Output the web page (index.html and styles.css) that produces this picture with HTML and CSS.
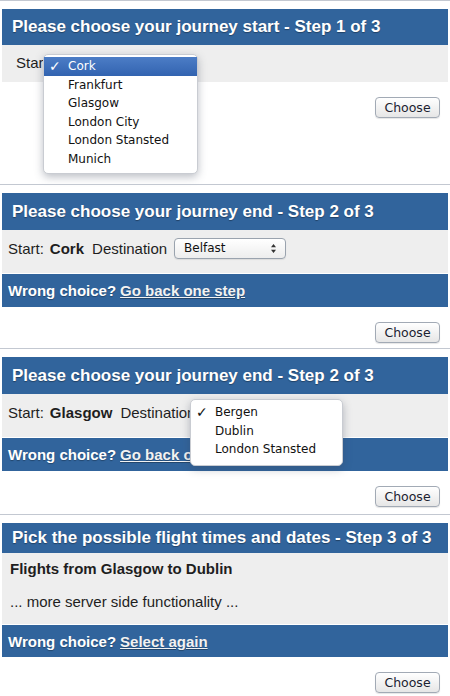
FILE: index.html
```html
<!DOCTYPE html>
<html lang="en">
<head>
<meta charset="utf-8">
<title>Journey steps</title>
<link rel="stylesheet" href="styles.css">
</head>
<body>
<div class="screen s1">
  <div class="panel">
    <div class="bar head">Please choose your journey start - Step 1 of 3</div>
    <div class="body body-s1"><span>Start:</span></div>
  </div>
  <div class="actions"><button class="btn">Choose</button></div>
  <ul class="menu menu-start">
    <li class="sel"><span class="check">✓</span>Cork</li>
    <li>Frankfurt</li>
    <li>Glasgow</li>
    <li>London City</li>
    <li>London Stansted</li>
    <li>Munich</li>
  </ul>
</div>

<div class="screen s2">
  <div class="panel">
    <div class="bar head">Please choose your journey end - Step 2 of 3</div>
    <div class="body">
      <span>Start:</span><b class="city">Cork</b><span>Destination</span>
      <span class="select">Belfast
        <svg class="arrows" width="7" height="11" viewBox="0 0 7 11"><path d="M3.5 1 L6 4.2 H1 Z M3.5 10 L6 6.8 H1 Z" fill="#333"/></svg>
      </span>
    </div>
    <div class="bar foot">Wrong choice? <a href="#">Go back one step</a></div>
  </div>
  <div class="actions"><button class="btn">Choose</button></div>
</div>

<div class="screen s3">
  <div class="panel">
    <div class="bar head">Please choose your journey end - Step 2 of 3</div>
    <div class="body">
      <span>Start:</span><b class="city">Glasgow</b><span>Destination</span>
    </div>
    <div class="bar foot">Wrong choice? <a href="#">Go back one step</a></div>
  </div>
  <div class="actions"><button class="btn">Choose</button></div>
  <ul class="menu menu-dest">
    <li><span class="check">✓</span>Bergen</li>
    <li>Dublin</li>
    <li>London Stansted</li>
  </ul>
</div>

<div class="screen s4">
  <div class="panel">
    <div class="bar head head-s4">Pick the possible flight times and dates - Step 3 of 3</div>
    <div class="body body-s4">
      <p class="flights">Flights from Glasgow to Dublin</p>
      <p class="more">... more server side functionality ...</p>
    </div>
    <div class="bar foot">Wrong choice? <a href="#">Select again</a></div>
  </div>
  <div class="actions"><button class="btn">Choose</button></div>
</div>
</body>
</html>
```

FILE: styles.css
```css
* { box-sizing: border-box; }
html, body { margin: 0; padding: 0; background: #fff; }
body {
  width: 450px;
  font-family: "Liberation Sans", Arial, Helvetica, sans-serif;
  color: #1e1e1e;
}
.screen {
  position: relative;
  border-top: 1px solid #c3c8d1;
  padding-top: 8px;
}
.s1 { padding-bottom: 66px; }
.s2 { padding-bottom: 5px; }
.s3 { padding-bottom: 7px; }
.s4 { padding-bottom: 3px; }

.panel { margin: 0 2px; }
.bar {
  background: #31649c;
  color: #fff;
  font-weight: bold;
  display: flex;
  align-items: center;
}
.head {
  height: 37px;
  padding-left: 10px;
  font-size: 17px;
  text-shadow: 0 1px 1px rgba(0,0,0,0.35);
}
.s1 .head { height: 36px; }
.head-s4 { height: 30px; }
.foot {
  height: 34px;
  border-top: 1px solid #fff;
  padding-left: 6px;
  font-size: 15px;
  text-shadow: 0 1px 1px rgba(0,0,0,0.3);
}
.s4 .foot { height: 33px; }
.foot a {
  color: #f2f2f2;
  text-decoration: underline;
  margin-left: 4px;
}
.body {
  background: #eeeeee;
  height: 43px;
  display: flex;
  align-items: center;
  padding: 0 6px 7px;
  font-size: 15px;
  gap: 6px;
}
.body-s1 { height: 37px; padding-left: 14px; padding-bottom: 3px; }
.city { font-weight: bold; margin-right: 2px; }
.select {
  margin-left: 1px;
  width: 112px;
  height: 21px;
  border: 1px solid #9aa3ae;
  border-radius: 4px;
  background: linear-gradient(#ffffff, #ededed);
  font-family: "DejaVu Sans", sans-serif;
  font-size: 12px;
  color: #111;
  display: flex;
  align-items: center;
  justify-content: space-between;
  padding: 0 8px 0 9px;
  box-shadow: 0 1px 1px rgba(0,0,0,0.08);
}
.arrows { display: block; }
.body-s4 {
  height: 71px;
  display: block;
  padding: 4px 8px 0;
}
.body-s4 p { margin: 0; line-height: 24px; }
.flights { font-weight: bold; }
.more { margin-top: 9px !important; }

.actions {
  display: flex;
  justify-content: flex-end;
  padding: 15px 10px 0 0;
}
.btn {
  width: 65px;
  height: 21px;
  border: 1px solid #a2aab5;
  border-radius: 4px;
  background: linear-gradient(#ffffff, #e6e6e6);
  font-family: "DejaVu Sans", sans-serif;
  font-size: 12.5px;
  color: #1b2230;
  padding: 0;
  box-shadow: 0 1px 1px rgba(0,0,0,0.1);
}

.menu {
  position: absolute;
  margin: 0;
  list-style: none;
  background: #fff;
  border: 1px solid #c9ccd2;
  border-radius: 5px;
  box-shadow: 0 3px 9px rgba(60,70,90,0.35);
  font-family: "DejaVu Sans", sans-serif;
  font-size: 12px;
  color: #111;
}
.menu li {
  position: relative;
  height: 18.5px;
  line-height: 18.5px;
  padding-left: 24px;
}
.menu .check {
  position: absolute;
  left: 5px;
  top: 0;
  font-size: 14px;
  font-weight: bold;
}
.menu li.sel {
  background: linear-gradient(#4c7dc6, #3263b0);
  color: #fff;
}
.menu-start {
  top: 53px;
  left: 43px;
  width: 155px;
  padding: 2px 0 5px;
}
.menu-dest {
  top: 50px;
  left: 190px;
  width: 153px;
  padding: 3px 0 6px;
}
```
